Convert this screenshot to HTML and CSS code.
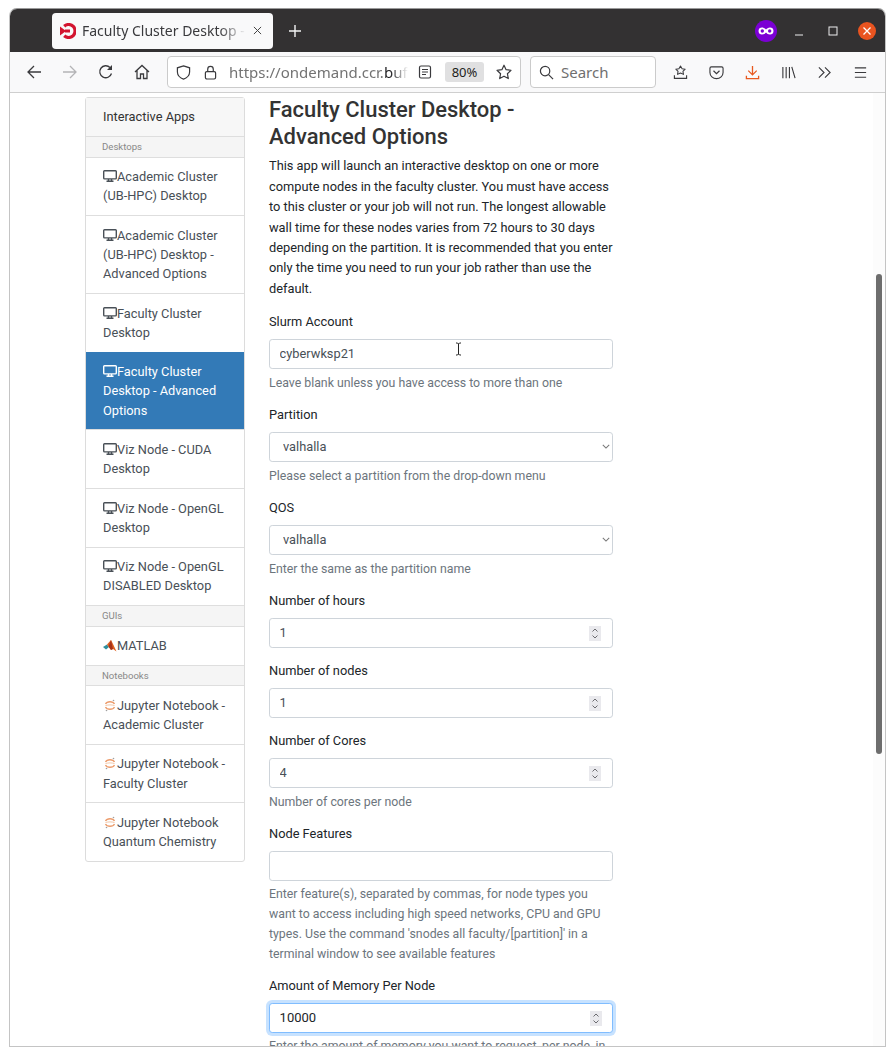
FILE: index.html
```html
<!DOCTYPE html>
<html lang="en">
<head>
<meta charset="utf-8">
<title>Faculty Cluster Desktop - Advanced Options</title>
<link rel="stylesheet" href="styles.css">
</head>
<body>
<svg class="defs" width="0" height="0">
  <symbol id="desk" viewBox="0 0 14 13"><rect x="0.7" y="0.7" width="12.6" height="8.2" rx="0.8" fill="none" stroke="currentColor" stroke-width="1.400"/><path d="M5.500 9v1.600M8.500 9v1.600M3.500 11.300h7" stroke="currentColor" stroke-width="1.500" fill="none"/></symbol>
  <symbol id="jup" viewBox="0 0 12 13"><g fill="none" stroke="#ec9c6c" stroke-width="1.300"><path d="M1.500 5c1.500-3 7.500-3 9 0"/><path d="M1.500 8c1.500 3 7.500 3 9 0"/></g><path d="M1.500 6.500c3-.8 6-.8 9 0" fill="none" stroke="#f3c7a8" stroke-width="1"/><circle cx="9.500" cy="1.500" r="0.800" fill="#a0a0a0"/><circle cx="2.500" cy="11.500" r="0.800" fill="#a0a0a0"/></symbol>
  <symbol id="spin" viewBox="0 0 12 15"><rect width="12" height="15" fill="#e9e9ed"/><path d="M3.500 5.500 6 3l2.500 2.500M3.500 9.500 6 12l2.500-2.500" fill="none" stroke="#6b6b70" stroke-width="1"/></symbol>
  <symbol id="chev" viewBox="0 0 10 6"><path d="M1 1l4 4 4-4" fill="none" stroke="#777" stroke-width="1.300"/></symbol>
</svg>

<div class="window">
  <header class="titlebar">
    <div class="tab">
      <svg class="favicon" viewBox="0 0 16 16"><path d="M4.200 3.200A6.500 6.500 0 1 1 4.200 12.800" fill="none" stroke="#d3142f" stroke-width="3.200"/><path d="M0 3.500 6 8l-6 4.500z" fill="#d3142f"/><path d="M5 8h5" stroke="#d3142f" stroke-width="2.800"/></svg>
      <span class="tab-title">Faculty Cluster Desktop - Advanced Options</span>
      <svg class="tab-close" viewBox="0 0 10 10"><path d="M1 1l8 8M9 1l-8 8" stroke="#444" stroke-width="1.100"/></svg>
    </div>
    <svg class="newtab" viewBox="0 0 12 12"><path d="M6 0v12M0 6h12" stroke="#f4f4f4" stroke-width="1.400"/></svg>
    <div class="winctl">
      <svg class="mask" viewBox="0 0 22 22"><circle cx="11" cy="11" r="11" fill="#7b00d4"/><path d="M3.500 11c0-2.500 1.500-3.500 3.500-3.500s3 1 4 2c1-1 2-2 4-2s3.500 1 3.500 3.500-1.500 3.500-3.500 3.500-3-1-4-2c-1 1-2 2-4 2s-3.500-1-3.500-3.500z" fill="#fff"/><circle cx="7.300" cy="11" r="1.700" fill="#7b00d4"/><circle cx="14.700" cy="11" r="1.700" fill="#7b00d4"/></svg>
      <svg class="min" viewBox="0 0 10 10"><path d="M1 9h8" stroke="#eee" stroke-width="1"/></svg>
      <svg class="max" viewBox="0 0 10 10"><rect x="1" y="1" width="8" height="8" fill="none" stroke="#eee" stroke-width="1"/></svg>
      <svg class="close" viewBox="0 0 18 18"><circle cx="9" cy="9" r="9" fill="#e95420"/><path d="M5.500 5.500l7 7M12.500 5.500l-7 7" stroke="#fff" stroke-width="1.300"/></svg>
    </div>
  </header>

  <nav class="toolbar">
    <svg class="tb" viewBox="0 0 16 16"><path d="M15 8H2M8 2 2 8l6 6" fill="none" stroke="#3a3a3d" stroke-width="1.300"/></svg>
    <svg class="tb" viewBox="0 0 16 16"><path d="M1 8h13M8 2l6 6-6 6" fill="none" stroke="#b4b4b6" stroke-width="1.300"/></svg>
    <svg class="tb" viewBox="0 0 16 16"><path d="M13.500 9.500A6 6 0 1 1 12 3.500" fill="none" stroke="#3a3a3d" stroke-width="1.300"/><path d="M14 1v5h-5z" fill="#3a3a3d"/></svg>
    <svg class="tb" viewBox="0 0 16 16"><path d="M1 8l7-6.500L15 8M3 6.500V14.500h3.500V10h3v4.500H13V6.500" fill="none" stroke="#3a3a3d" stroke-width="1.300"/></svg>
    <div class="urlbar">
      <svg class="ub shield" viewBox="0 0 16 16"><path d="M8 1l6.500 2v4.500c0 3.500-3 6.500-6.500 7.500-3.500-1-6.500-4-6.500-7.500V3z" fill="none" stroke="#3a3a3d" stroke-width="1.300"/></svg>
      <svg class="ub lock" viewBox="0 0 14 16"><rect x="1.500" y="7" width="11" height="8" rx="1.500" fill="none" stroke="#3a3a3d" stroke-width="1.300"/><path d="M4 7V4.500a3 3 0 0 1 6 0V7" fill="none" stroke="#3a3a3d" stroke-width="1.300"/></svg>
      <span class="url">https://ondemand.ccr.<b>buffalo.edu</b></span>
      <svg class="ub reader" viewBox="0 0 14 14"><rect x="1.500" y="1" width="11" height="12" rx="1.500" fill="none" stroke="#3a3a3d" stroke-width="1.200"/><path d="M4 4.500h6M4 7h6M4 9.500h4" stroke="#3a3a3d" stroke-width="1.100"/></svg>
      <span class="zoomlvl">80%</span>
      <svg class="ub star" viewBox="0 0 16 16"><path d="M8 1.200l2.100 4.500 4.900.6-3.600 3.400.9 4.900L8 12.200l-4.300 2.400.9-4.900L1 6.300l4.900-.6z" fill="none" stroke="#3a3a3d" stroke-width="1.200" stroke-linejoin="round"/></svg>
    </div>
    <div class="searchbar">
      <svg class="sicon" viewBox="0 0 16 16"><circle cx="6.500" cy="6.500" r="5" fill="none" stroke="#3a3a3d" stroke-width="1.300"/><path d="M10.200 10.200 15 15" stroke="#3a3a3d" stroke-width="1.300"/></svg>
      <span>Search</span>
    </div>
    <div class="tools">
      <svg class="tb2" viewBox="0 0 16 16"><path d="M8 1l1.700 3 3.300.5-2.400 2.300.6 3.200L8 8.500 4.800 10l.6-3.200L3 4.500 6.300 4z" fill="none" stroke="#3a3a3d" stroke-width="1.100" stroke-linejoin="round"/><path d="M1.500 11v3.200h13V11" fill="none" stroke="#3a3a3d" stroke-width="1.200"/></svg>
      <svg class="tb2" viewBox="0 0 16 16"><path d="M2.500 2h11A1.500 1.500 0 0 1 15 3.500V8a7 6.500 0 0 1-14 0V3.500A1.500 1.500 0 0 1 2.500 2z" fill="none" stroke="#3a3a3d" stroke-width="1.200"/><path d="M4.800 6.200 8 9.200l3.200-3" fill="none" stroke="#3a3a3d" stroke-width="1.300"/></svg>
      <svg class="tb2" viewBox="0 0 16 16"><path d="M8 1v9M3.500 6 8 10.500 12.500 6M1.500 11.500v3h13v-3" fill="none" stroke="#e8591f" stroke-width="1.400"/></svg>
      <svg class="tb2" viewBox="0 0 16 16"><path d="M2 2v12M5.500 2v12M9 2v12M11.500 2l3.500 12" fill="none" stroke="#3a3a3d" stroke-width="1.200"/></svg>
      <svg class="tb2" viewBox="0 0 16 16"><path d="M2 2.500 7.500 8 2 13.500M8.500 2.500 14 8l-5.500 5.500" fill="none" stroke="#3a3a3d" stroke-width="1.200"/></svg>
      <svg class="tb2" viewBox="0 0 16 16"><path d="M2 3h12M2 8h12M2 13h12" stroke="#3a3a3d" stroke-width="1.200"/></svg>
    </div>
  </nav>

  <main class="page">
    <aside class="applist">
      <div class="item head">Interactive Apps</div>
      <div class="cat">Desktops</div>
      <a class="item"><svg class="ico"><use href="#desk"/></svg>Academic Cluster (UB-HPC) Desktop</a>
      <a class="item"><svg class="ico"><use href="#desk"/></svg>Academic Cluster (UB-HPC) Desktop - Advanced Options</a>
      <a class="item"><svg class="ico"><use href="#desk"/></svg>Faculty Cluster Desktop</a>
      <a class="item active"><svg class="ico"><use href="#desk"/></svg>Faculty Cluster Desktop - Advanced Options</a>
      <a class="item"><svg class="ico"><use href="#desk"/></svg>Viz Node - CUDA Desktop</a>
      <a class="item"><svg class="ico"><use href="#desk"/></svg>Viz Node - OpenGL Desktop</a>
      <a class="item"><svg class="ico"><use href="#desk"/></svg>Viz Node - OpenGL DISABLED Desktop</a>
      <div class="cat">GUIs</div>
      <a class="item"><svg class="ico" viewBox="0 0 14 13"><path d="M0 8 4 5.500l2 2.500-3 2.500z" fill="#2f8f9e"/><path d="M4 5.500 8 1l2 4 3.500 7.500-3.500-2.500-2 1z" fill="#e0601f"/><path d="M8 1 5.500 7.500 8 11l2-1z" fill="#a8341a"/></svg>MATLAB</a>
      <div class="cat">Notebooks</div>
      <a class="item"><svg class="ico"><use href="#jup"/></svg>Jupyter Notebook - Academic Cluster</a>
      <a class="item"><svg class="ico"><use href="#jup"/></svg>Jupyter Notebook - Faculty Cluster</a>
      <a class="item"><svg class="ico"><use href="#jup"/></svg>Jupyter Notebook Quantum Chemistry</a>
    </aside>

    <section class="form">
      <h3>Faculty Cluster Desktop - Advanced Options</h3>
      <p class="intro">This app will launch an interactive desktop on one or more compute nodes in the faculty cluster. You must have access to this cluster or your job will not run. The longest allowable wall time for these nodes varies from 72 hours to 30 days depending on the partition. It is recommended that you enter only the time you need to run your job rather than use the default.</p>

      <div class="group">
        <label>Slurm Account</label>
        <div class="field"><input class="control" type="text" value="cyberwksp21">
          <svg class="cursor" viewBox="0 0 7 13"><path d="M1 .5h1.500l1 1 1-1H6M3.500 1.500v10M1 12.500h1.500l1-1 1 1H6" fill="none" stroke="#222" stroke-width="1"/></svg>
        </div>
        <small>Leave blank unless you have access to more than one</small>
      </div>
      <div class="group">
        <label>Partition</label>
        <div class="field"><select class="control sel"><option>valhalla</option></select><svg class="chev"><use href="#chev"/></svg></div>
        <small>Please select a partition from the drop-down menu</small>
      </div>
      <div class="group">
        <label>QOS</label>
        <div class="field"><select class="control sel"><option>valhalla</option></select><svg class="chev"><use href="#chev"/></svg></div>
        <small>Enter the same as the partition name</small>
      </div>
      <div class="group">
        <label>Number of hours</label>
        <div class="field"><input class="control" type="text" value="1"><svg class="spin"><use href="#spin"/></svg></div>
      </div>
      <div class="group">
        <label>Number of nodes</label>
        <div class="field"><input class="control" type="text" value="1"><svg class="spin"><use href="#spin"/></svg></div>
      </div>
      <div class="group">
        <label>Number of Cores</label>
        <div class="field"><input class="control" type="text" value="4"><svg class="spin"><use href="#spin"/></svg></div>
        <small>Number of cores per node</small>
      </div>
      <div class="group">
        <label>Node Features</label>
        <div class="field"><input class="control" type="text" value=""></div>
        <small>Enter feature(s), separated by commas, for node types you want to access including high speed networks, CPU and GPU types. Use the command 'snodes all faculty/[partition]' in a terminal window to see available features</small>
      </div>
      <div class="group">
        <label>Amount of Memory Per Node</label>
        <div class="field"><input class="control focus" type="text" value="10000"><svg class="spin"><use href="#spin"/></svg></div>
        <small>Enter the amount of memory you want to request, per node, in megabytes</small>
      </div>
    </section>
    <div class="scrolltrack"><div class="thumb"></div></div>
  </main>
</div>
</body>
</html>
```

FILE: styles.css
```css
* { box-sizing: border-box; }
html, body { margin: 0; height: 100%; background: #fff; overflow: hidden; }
.defs { position: absolute; }

.window {
  margin: 8px 9px 0 9px;
  width: 877px;
  height: 1039px;
  border: 1px solid #c4c4c4;
  border-top-color: #9a9a9a;
  border-radius: 8px 8px 0 0;
  display: flex;
  flex-direction: column;
  overflow: hidden;
}

/* title bar */
.titlebar {
  height: 43px;
  flex: none;
  background: #333132;
  display: flex;
  align-items: center;
  padding-left: 42px;
}
.tab {
  width: 221px;
  height: 36px;
  background: #f9f9fa;
  border-radius: 4px;
  display: flex;
  align-items: center;
  padding-left: 8px;
  position: relative;
}
.favicon { width: 16px; height: 16px; flex: none; }
.tab-title {
  margin-left: 6px;
  font: 14px "Noto Sans", sans-serif;
  color: #3a3a3d;
  white-space: nowrap;
  overflow: hidden;
  width: 164px;
  -webkit-mask-image: linear-gradient(90deg, #000 84%, transparent 100%);
  mask-image: linear-gradient(90deg, #000 84%, transparent 100%);
}
.tab-close { width: 9px; height: 9px; margin-left: 7px; flex: none; }
.newtab { width: 12px; height: 12px; margin-left: 16px; }
.winctl { margin-left: auto; display: flex; align-items: center; padding-right: 9px; }
.mask { width: 22px; height: 22px; }
.min { width: 10px; height: 10px; margin-left: 17px; }
.max { width: 10px; height: 10px; margin-left: 24px; }
.close { width: 18px; height: 18px; margin-left: 20px; }

/* toolbar */
.toolbar {
  height: 41px;
  flex: none;
  background: #f9f9fa;
  border-bottom: 1px solid #cfcfcf;
  display: flex;
  align-items: center;
  padding-left: 16px;
}
.tb { width: 16px; height: 16px; flex: none; margin-right: 20px; }
.urlbar {
  flex: none;
  width: 354px;
  height: 32px;
  margin-left: -3px;
  background: #fff;
  border: 1px solid #cbcbcb;
  border-radius: 4px;
  display: flex;
  align-items: center;
  padding-left: 8px;
}
.ub { flex: none; }
.shield { width: 15px; height: 15px; }
.lock { width: 13px; height: 15px; margin-left: 13px; }
.url {
  margin-left: 12px;
  width: 179px;
  font: 15px "Noto Sans", sans-serif;
  color: #737373;
  white-space: nowrap;
  overflow: hidden;
  -webkit-mask-image: linear-gradient(90deg, #000 90%, transparent 100%);
  mask-image: linear-gradient(90deg, #000 90%, transparent 100%);
}
.url b { font-weight: 400; color: #1d1d20; }
.reader { width: 14px; height: 14px; margin-left: 10px; }
.zoomlvl {
  margin-left: 13px;
  width: 39px;
  height: 20px;
  background: #e0e0e1;
  border-radius: 3px;
  font: 13px/20px "Noto Sans", sans-serif;
  color: #1d1d20;
  text-align: center;
}
.star { width: 16px; height: 16px; margin-left: 12px; }
.searchbar {
  flex: none;
  width: 126px;
  height: 32px;
  margin-left: 9px;
  background: #fff;
  border: 1px solid #cbcbcb;
  border-radius: 4px;
  display: flex;
  align-items: center;
  padding-left: 8px;
  font: 15px "Noto Sans", sans-serif;
  color: #6f6f6f;
}
.sicon { width: 15px; height: 15px; margin-right: 7px; flex: none; }
.tools { display: flex; align-items: center; margin-left: 17px; flex: none; }
.tb2 { width: 15px; height: 15px; margin-right: 21px; flex: none; }
.tb2:last-child { margin-right: 0; }

/* page */
.page {
  flex: 1;
  min-height: 0;
  position: relative;
  overflow: hidden;
  background: #fff;
  display: flex;
  align-items: flex-start;
  padding: 3px 0 0 75px;
  font: 12.8px/1.6 Roboto, sans-serif;
  color: #212529;
}

/* sidebar */
.applist {
  width: 160px;
  flex: none;
  margin-top: 1px;
  border: 1px solid #dcdcdc;
  border-radius: 3px;
  line-height: 19.2px;
}
.item {
  display: block;
  padding: 9.6px 15px 9.6px 17px;
  color: #495057;
  border-top: 1px solid #dedede;
}
.item.head { border-top: 0; background: #f7f7f7; color: #333; padding-top: 9px; padding-bottom: 10.200px; }
.item.active { background: #337ab7; color: #fff; border-top-color: #337ab7; }
.cat {
  background: #f5f5f5;
  border-top: 1px solid #dedede;
  padding: 3px 16px;
  height: 20.300px;
  font-size: 9.6px;
  line-height: 14px;
  color: #888;
}
.ico { width: 14px; height: 13px; vertical-align: -2px; color: inherit; }

/* form */
.form { width: 344px; margin-left: 24px; flex: none; }
h3 {
  margin: 1px 0 5.400px;
  font-size: 21.95px;
  line-height: 26.880px;
  font-weight: 500;
  color: #333;
}
.intro { margin: 0 0 12.800px; }
.group { margin-bottom: 12.800px; }
label { display: block; margin-bottom: 6.400px; }
.field { position: relative; }
.control {
  display: block;
  width: 100%;
  height: 30.400px;
  padding: 3.800px 9.600px 5.800px;
  font: 12.8px/19.200px Roboto, sans-serif;
  color: #495057;
  background: #fff;
  border: 1px solid #ced4da;
  border-radius: 3.200px;
  outline: 0;
}
.sel { appearance: none; -webkit-appearance: none; padding-left: 13px; }
.focus {
  border-color: #80bdff;
  box-shadow: 0 0 0 3px rgba(0, 123, 255, .22);
  font-size: 13px;
  color: #212529;
}
.chev { position: absolute; right: 3px; top: 12px; width: 8px; height: 5px; }
.spin { position: absolute; right: 12px; top: 8px; width: 12px; height: 15px; }
.focus + .spin { right: 11px; }
.cursor { position: absolute; left: 186px; top: 3px; width: 7px; height: 14px; }
small {
  display: block;
  margin-top: 4.200px;
  margin-bottom: -1px;
  font-size: 12.320px;
  line-height: 1.600;
  color: #6c757d;
}

/* scrollbar over the page */
.scrolltrack {
  position: absolute;
  top: 0;
  right: 0;
  bottom: 0;
  width: 12px;
  background: #fcfcfc;
}
.thumb {
  position: absolute;
  top: 181px;
  left: 3px;
  width: 6px;
  height: 480px;
  border-radius: 3px;
  background: #6d6d6d;
}
```
